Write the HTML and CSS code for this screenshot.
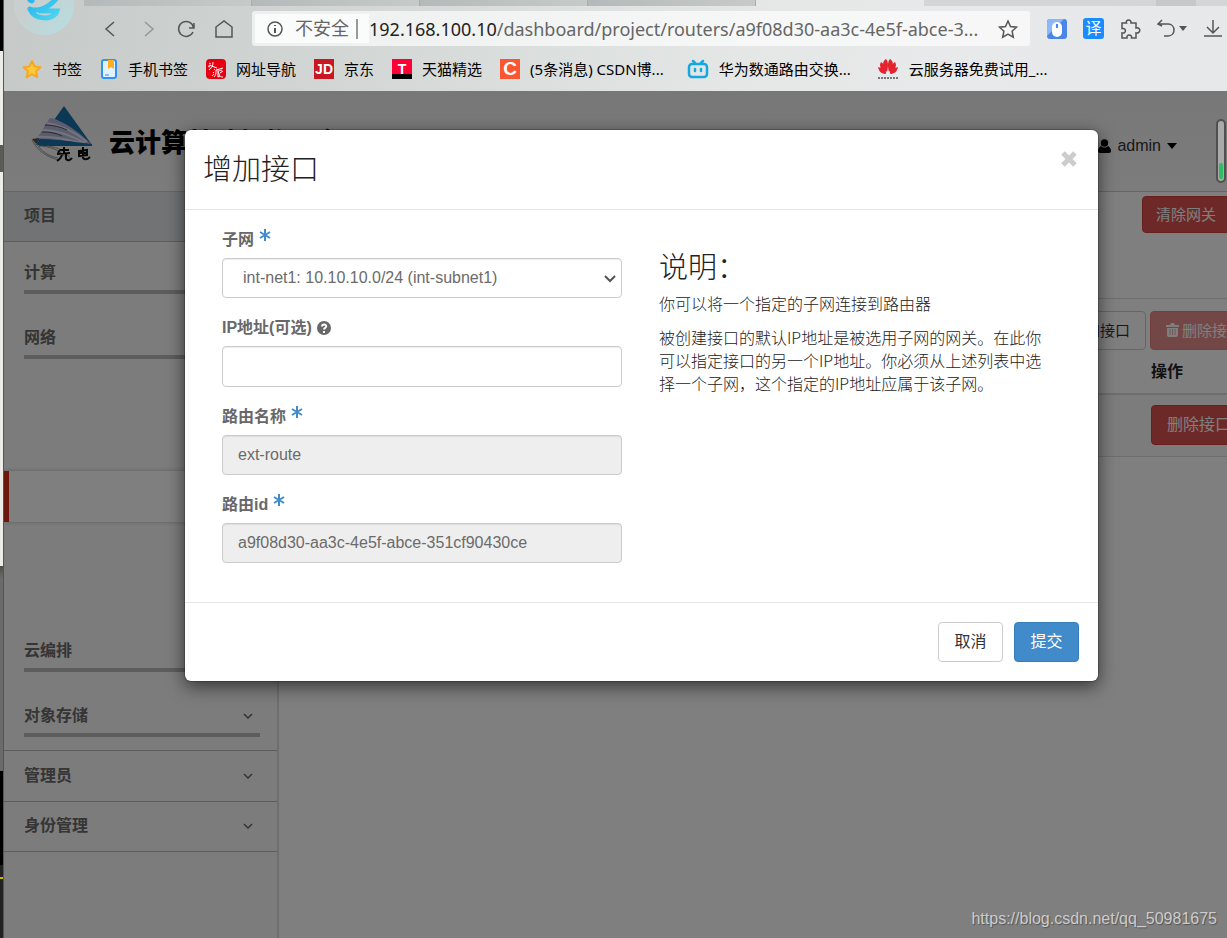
FILE: index.html
```html
<!DOCTYPE html>
<html lang="zh-CN">
<head>
<meta charset="utf-8">
<title>增加接口</title>
<link rel="stylesheet" href="styles.css">
</head>
<body>
<div class="desktop">
  <div class="edge" aria-hidden="true">
    <span class="e1"></span><span class="e2"></span><span class="e3"></span><span class="e4"></span><span class="e5"></span><span class="e6"></span><span class="e7"></span>
  </div>
  <div class="browser">
    <header class="chrome">
      <svg class="avatar" width="64" height="38" viewBox="0 0 64 38" aria-hidden="true">
        <defs><linearGradient id="av" x1="0" y1="0" x2="1" y2="1"><stop offset="0.4" stop-color="#c9cfce"/><stop offset="1" stop-color="#b4dfe3"/></linearGradient><linearGradient id="eb" x1="0" y1="0" x2="1" y2="1"><stop offset="0" stop-color="#25b4ee"/><stop offset="1" stop-color="#4fd6ee"/></linearGradient></defs>
        <circle cx="34" cy="5" r="30" fill="url(#av)"/>
        <path d="M20 0 22 1M20 9c8 3 18-1 26-10M20 9c3 7 8 9 15 9 6 0 11-3 12-7H30" fill="none" stroke="url(#eb)" stroke-width="5" stroke-linecap="round"/>
      </svg>
      <div class="tabs"><i></i><i></i><i></i><i></i><i class="on"></i><i class="rest"></i><i class="new"></i><i class="tail"></i></div>
      <div class="toolbar">
        <nav class="nav">
          <button aria-label="后退"><svg width="20" height="20" viewBox="0 0 20 20"><path d="M14 3 6 10l8 7"/></svg></button>
          <button aria-label="前进" class="off"><svg width="20" height="20" viewBox="0 0 20 20"><path d="m7 3 8 7-8 7"/></svg></button>
          <button aria-label="刷新"><svg width="20" height="20" viewBox="0 0 20 20"><path d="M17 13a7.500 7.500 0 1 1 .5-4.500M18 4v5h-5"/></svg></button>
          <button aria-label="主页"><svg width="20" height="20" viewBox="0 0 20 20"><path d="M2 18V8l8-6 8 6v10z"/></svg></button>
        </nav>
        <div class="address">
          <div class="security"><svg width="20" height="20" viewBox="0 0 20 20"><circle cx="10" cy="10" r="7"/><path d="M10 9v5M10 6v1" stroke-width="2"/></svg><span>不安全</span><b></b></div>
          <div class="url"><span>192.168.100.10</span>/dashboard/project/routers/a9f08d30-aa3c-4e5f-abce-3...</div>
          <button aria-label="收藏"><svg width="20" height="20" viewBox="0 0 20 20"><path d="m10 2 2.500 5.500 6 .7-4.400 4 1.200 6-5.300-3-5.300 3 1.200-6-4.400-4 6-.7z"/></svg></button>
        </div>
        <div class="tools">
          <button aria-label="鼠标手势"><svg class="fill" width="22" height="22" viewBox="0 0 22 22"><rect x="1" y="1" width="20" height="20" rx="3" fill="#4a86e8"/><path d="M1 18V4q0-3 3-3h14z" fill="#8ab8f8"/><rect x="6" y="4" width="10" height="15" rx="5" fill="#fff"/><path d="M11 6v4" stroke="#4a86e8" stroke-width="2"/></svg></button>
          <button aria-label="翻译" class="trans">译</button>
          <button aria-label="扩展"><svg width="22" height="22" viewBox="0 0 22 22"><path d="M3 5h4.500C6 1 13 1 12 5h5v5c5-1.500 5 6 0 5v5h-4.500c1-4-5.500-4-4.500 0H3v-5c4.500 1 4.500-5.500 0-4.500z"/></svg></button>
          <button aria-label="恢复"><svg width="32" height="22" viewBox="0 0 32 22"><path d="M6 2 2 6l4 2M2 6h10c8 0 8 12 0 12H8"/><path d="M23 8h8l-4 5z" class="solid"/></svg></button>
          <button aria-label="下载"><svg width="20" height="22" viewBox="0 0 20 22"><path d="M10 2v13M4 9l6 6 6-6M1 18h18"/></svg></button>
        </div>
      </div>
      <nav class="bookmarks">
        <a href="#"><svg width="20" height="20" viewBox="0 0 20 20"><path d="m10 2 2.500 5.500 6 .7-4.400 4 1.200 6-5.300-3-5.300 3 1.200-6-4.400-4 6-.7z" fill="#ffc83d" stroke="#f7a823" stroke-width="2" stroke-linejoin="round"/></svg>书签</a>
        <a href="#"><svg width="18" height="20" viewBox="0 0 18 20"><rect x="2" y="1" width="14" height="18" rx="2" fill="#e3f1ff" stroke="#2e92f7" stroke-width="2"/><path d="M8 1h6v9l-3-2-3 2z" fill="#ffb020"/><path d="M5 16h4" stroke="#2e92f7"/></svg>手机书签</a>
        <a href="#"><svg width="20" height="20" viewBox="0 0 20 20"><rect width="20" height="20" rx="4" fill="#e60012"/><path d="m3 4 2 1M2 7l2 1M7 3c0 4-1 5-4 8M3 6l8 3M8 10l1 1m-2 2 1 1m-2 3 2-2m2-4 7-2m-7 2c0 4 0 5-2 7m4-7v7l2-1m2-6c-4 1-4 1-3 4s2 3 4 3m-3-4 3-2" fill="none" stroke="#fff"/></svg>网址导航</a>
        <a href="#"><span class="ico jd">JD</span>京东</a>
        <a href="#"><span class="ico tm">T</span>天猫精选</a>
        <a href="#"><span class="ico cs">C</span>(5条消息) CSDN博...</a>
        <a href="#" class="bili"><svg width="22" height="20" viewBox="0 0 22 20"><g fill="none" stroke="#14a8e0" stroke-width="2.500" stroke-linecap="round"><rect x="2" y="5" width="18" height="13" rx="3"/><path d="m6 2 2 2M16 2l-2 2M8 10v2M14 10v2"/></g></svg>华为数通路由交换...</a>
        <a href="#" class="huawei"><svg width="22" height="22" viewBox="0 0 22 22"><g fill="#e4232e"><path d="M10 14C5 9 5 3 9 1c3 3 2 9 1 13zM12 14c-1-4-2-10 1-13 4 2 4 8-1 13zM9 15C3 12 2 7 4 4c3 2 5 6 5 11zM13 15c0-5 2-9 5-11 2 3 1 8-5 11zM9 16c-4 0-7-2-8-7 4 1 7 4 8 7zM13 16c1-3 4-6 8-7-1 5-4 7-8 7z"/></g><path d="M1 20h20" stroke="#777" stroke-width="2" stroke-dasharray="2 1"/></svg>云服务器免费试用_...</a>
      </nav>
    </header>

    <div class="dash">
      <header class="top">
        <svg width="64" height="58" viewBox="0 0 64 58" aria-hidden="true">
          <path d="M33 1 61 40H5z" fill="#1670a8"/>
          <path d="M19 13c9 1 28 12 42 27-16-4-38-5-56-6L11 26l3-6z" fill="#b4b9de"/>
          <path d="M16 18c14 2 28 9 40 19M11 25c14 0 28 5 43 13M5 32c14-1 30 2 45 6" stroke="#e8e8fa" stroke-width="2" fill="none"/>
          <path d="M14 20c8 0 16 2 22 5M11 27c8 0 14 1 20 4" stroke="#555" stroke-width="1" fill="none"/>
          <path d="M7 34c14 0 38 3 54 5v2H8z" fill="#1670a8"/>
          <path d="m1 34 7-1-2 7z" fill="#555"/>
          <path d="M1 35c5 10 14 17 27 20M5 38c5 8 12 13 22 15M8 41c10 0 22 4 28 13M16 41c12 1 20 6 24 14" fill="none" stroke="#999" stroke-width="1"/>
          <g fill="none" stroke="#111" stroke-width="2"><path d="M33 42v7m-4-4-2 3m2-3h9M26 49l13-1M31 49c0 3-2 5-5 7m9-8v6q3 3 6-1M48 46l8-1v5l-8 1zM48 48h8M52 42v11q3 3 7-1"/></g>
        </svg>
        <strong>云计算基础架构平台</strong>
        <button class="user"><svg width="13" height="14" viewBox="0 0 13 14"><circle cx="6.500" cy="4" r="3.700"/><path d="M3 7c-2 1-3 3-3 5 0 1 1 2 2 2h9c1 0 2-1 2-2 0-2-1-4-3-5-2 2-5 2-7 0z"/></svg>admin<svg width="10" height="6" viewBox="0 0 10 6"><path d="M0 0h10L5 6z"/></svg></button>
      </header>
      <div class="columns">
        <nav class="side">
          <a class="group open" href="#">项目</a>
          <div class="panels">
            <a class="panel" href="#">计算</a>
            <a class="panel" href="#">网络</a>
            <a class="current" href="#" aria-label="路由"></a>
            <a class="panel" href="#">云编排</a>
            <a class="panel" href="#">对象存储<svg width="10" height="6" viewBox="0 0 10 6"><path d="m1 1 4 4 4-4"/></svg></a>
          </div>
          <a class="group" href="#">管理员<svg width="10" height="6" viewBox="0 0 10 6"><path d="m1 1 4 4 4-4"/></svg></a>
          <a class="group last" href="#">身份管理<svg width="10" height="6" viewBox="0 0 10 6"><path d="m1 1 4 4 4-4"/></svg></a>
        </nav>
        <main class="content">
          <div class="gateway"><button class="btn danger small">清除网关</button></div>
          <div class="actions">
            <button class="btn">增加接口</button>
            <button class="btn danger faded"><svg width="13" height="14" viewBox="0 0 13 14"><path d="M0 2h4l1-2h3l1 2h4v2H0zM1 5h11v7q0 2-2 2H3q-2 0-2-2z"/><path d="M4 6v6M6.500 6v6M9 6v6" stroke="#d9837f"/></svg>删除接口</button>
          </div>
          <table class="grid">
            <thead><tr><th></th><th class="act">操作</th></tr></thead>
            <tbody><tr><td></td><td><button class="btn danger">删除接口</button></td></tr></tbody>
          </table>
        </main>
      </div>

      <div class="overlay">
        <form class="modal" role="dialog" aria-labelledby="ttl">
          <header class="mhead">
            <h1 id="ttl">增加接口</h1>
            <button type="button" aria-label="关闭"><svg width="18" height="18" viewBox="0 0 18 18"><path d="m3 3 12 12M15 3 3 15"/></svg></button>
          </header>
          <div class="mbody">
            <div class="fields">
              <div class="field">
                <label for="subnet">子网<svg class="req" width="12" height="12" viewBox="0 0 12 12"><path d="M6 0v12M1 3l10 6M11 3 1 9"/></svg></label>
                <div class="pick"><select id="subnet"><option>int-net1: 10.10.10.0/24 (int-subnet1)</option></select><svg width="12" height="8" viewBox="0 0 12 8"><path d="m1 1 5 5 5-5"/></svg></div>
              </div>
              <div class="field">
                <label for="ip">IP地址(可选)<svg class="help" width="14" height="14" viewBox="0 0 14 14"><circle cx="7" cy="7" r="7" fill="#686868"/><path d="M5 5.500c0-3 4.500-2.500 4.200 0C9 7 7 6.700 7 8.500M7 10v2" fill="none" stroke="#fff" stroke-width="2"/></svg></label>
                <input id="ip" type="text">
              </div>
              <div class="field">
                <label for="rname">路由名称<svg class="req" width="12" height="12" viewBox="0 0 12 12"><path d="M6 0v12M1 3l10 6M11 3 1 9"/></svg></label>
                <input id="rname" type="text" value="ext-route" readonly>
              </div>
              <div class="field">
                <label for="rid">路由id<svg class="req" width="12" height="12" viewBox="0 0 12 12"><path d="M6 0v12M1 3l10 6M11 3 1 9"/></svg></label>
                <input id="rid" type="text" value="a9f08d30-aa3c-4e5f-abce-351cf90430ce" readonly>
              </div>
            </div>
            <div class="desc">
              <h2>说明：</h2>
              <p>你可以将一个指定的子网连接到路由器</p>
              <p>被创建接口的默认IP地址是被选用子网的网关。在此你可以指定接口的另一个IP地址。你必须从上述列表中选择一个子网，这个指定的IP地址应属于该子网。</p>
            </div>
          </div>
          <footer class="mfoot">
            <button type="button" class="btn">取消</button>
            <button type="submit" class="btn primary">提交</button>
          </footer>
        </form>
      </div>
      <div class="meter" aria-hidden="true"><i></i></div>
      <div class="mark">https://blog.csdn.net/qq_50981675</div>
    </div>
  </div>
</div>
</body>
</html>
```

FILE: styles.css
```css
* { box-sizing: border-box; }
body { margin: 0; font: 16px/24px "Liberation Sans", "Noto Sans CJK SC", sans-serif; color: #333; overflow: hidden; }
button { font: inherit; color: inherit; border: 0; background: none; padding: 0; }
a { color: inherit; text-decoration: none; }
svg { flex: none; }

.desktop { display: flex; height: 100vh; }
.edge { width: 4px; flex: none; display: flex; flex-direction: column; border-right: 1px solid #555; }
.e1 { flex: 51; background: #000; }
.e2 { flex: 94; background: #ecece8; }
.e3 { flex: 27; background: #5b5a56; }
.e4 { flex: 394; background: #ecece8; }
.e5 { flex: 205; background: linear-gradient(#4c4c4a, #6a6a68 12px); }
.e6 { flex: 94; background: #000; }
.e7 { flex: 73; background: linear-gradient(#222 12px, #c9b400 12px, #c9b400 14px, #222 14px); }

.browser { flex: 1; min-width: 0; display: flex; flex-direction: column; }

/* browser chrome */
.chrome { position: relative; flex: none; background: linear-gradient(100deg, #c5cac9, #d3d8d7 30%, #e4e7e6 60%, #e8e9ea 75%, #e7e8e9); }
.avatar { position: absolute; left: 6px; top: 0; }
.tabs { display: flex; height: 6px; padding-left: 80px; }
.tabs i { width: 168px; background: linear-gradient(90deg, #b4bab9, #c6cbca); border-right: 1px solid #a5abaa; }
.tabs .on { background: none; border: 0; }
.tabs .rest { width: 232px; background: #d4d5d6; border: 0; }
.tabs .new { width: 40px; background: #c6c8c9; border: 0; }
.tabs .tail { flex: 1; background: #d4d5d6; border: 0; }

.toolbar { display: flex; align-items: center; height: 45px; }
.toolbar svg { display: block; fill: none; stroke: #555; stroke-width: 1.500; }
.toolbar svg.fill { stroke: none; }
.toolbar .solid { fill: #555; stroke: none; }
.nav { display: flex; gap: 18px; padding-left: 96px; }
.nav .off { opacity: .45; }
.address { flex: 1; min-width: 0; display: flex; align-items: center; height: 35px; margin-left: 18px; padding: 0 12px 0 3px; background: rgba(255, 255, 255, .65); border-radius: 3px; }
.security { display: flex; align-items: center; gap: 10px; height: 29px; padding: 0 11px 0 10px; background: rgba(255, 255, 255, .7); font-size: 18px; color: #666; }
.security b { width: 2px; height: 20px; margin-left: -3px; background: #999; }
.url { flex: 1; min-width: 0; overflow: hidden; white-space: nowrap; font: 18px/28px "Noto Sans", sans-serif; color: #666; }
.url span { color: #222; }
.tools { display: flex; align-items: center; gap: 15px; margin: 0 4px 0 16px; }
.trans { width: 21px; height: 21px; border-radius: 3px; background: #1a8cff; color: #fff; font-size: 16px; line-height: 20px; }

.bookmarks { display: flex; align-items: center; height: 40px; padding: 0 0 4px 18px; gap: 18px; font: 15px/24px "Noto Sans", "Noto Sans CJK SC", sans-serif; color: #000; white-space: nowrap; }
.bookmarks a { display: flex; align-items: center; gap: 10px; }
.bookmarks .bili { margin-left: 5px; }
.bookmarks .huawei { margin-left: 8px; }
.ico { width: 20px; height: 20px; font: 700 14px/20px "Liberation Sans", sans-serif; text-align: center; color: #fff; }
.jd { background: #c81623; }
.tm { background: linear-gradient(#ff0036 15px, #000 15px); }
.cs { background: #fc5531; font-size: 19px; }

/* dashboard */
.dash { position: relative; flex: 1; min-height: 0; overflow: hidden; display: flex; flex-direction: column; background: #fff; }
.top { display: flex; align-items: center; height: 101px; flex: none; padding: 0 50px 15px 27px; background: linear-gradient(#efefef, #f9f9f9); border-bottom: 1px solid #ccc; }
.top strong { flex: 1; margin-left: 14px; padding-top: 18px; font-size: 26px; font-weight: 900; color: #000; }
.user { display: flex; align-items: center; gap: 6px; padding-top: 24px; }
.columns { display: flex; flex: 1; min-height: 0; }
.side { width: 275px; flex: none; background: #f9f9f9; border-right: 2px solid #ddd; font-weight: 700; color: #6a6a6a; }
.side svg { fill: none; stroke: #666; stroke-width: 1.500; }
.group { display: flex; align-items: center; justify-content: space-between; height: 51px; padding: 0 24px 1px 20px; border-bottom: 1px solid #bbb; }
.group.open, .group.last { height: 50px; }
.group.open { background: #e3e6e9; }
.panels { padding: 0 17px 13px 20px; margin-top: -13px; border-bottom: 1px solid #bbb; }
.panel { display: flex; align-items: center; justify-content: space-between; height: 65px; padding: 26px 7px 0 0; border-bottom: 4px solid #bbb; }
.current { display: block; height: 51px; margin: 112px -17px 85px -20px; background: #fff; border-left: 5px solid #d9301a; box-shadow: 0 0 4px #bbb; }

.content { flex: 1; min-width: 0; margin-right: -31px; }
.btn { height: 40px; padding: 0 15px; border: 1px solid #ccc; border-radius: 4px; background: #fff; color: #333; font-size: 16px; white-space: nowrap; }
.danger { background: #d9534f; border-color: #d43f3a; color: #fff; }
.small { height: 37px; padding: 0 13px; font-size: 15px; }
.faded { opacity: .65; }
.faded svg { margin-right: 3px; fill: #fff; vertical-align: -1px; }
.gateway { display: flex; justify-content: flex-end; height: 107px; padding: 4px 28px 0; border-bottom: 1px solid #ddd; }
.actions { display: flex; justify-content: flex-end; gap: 4px; padding: 12px 0 0; }
.actions .btn { height: 39px; font-size: 15px; }
.grid { width: 100%; border-collapse: collapse; }
.grid th { height: 44px; padding: 0; text-align: left; color: #222; border-bottom: 2px solid #ddd; }
.grid .act { width: 107px; }
.grid td { height: 62px; padding: 0; background: #f9f9f9; border-bottom: 1px solid #ddd; }

/* dialog */
.overlay { position: absolute; inset: 0; padding: 39px 129px 0 181px; background: rgba(0, 0, 0, .5); }
.modal { background: #fff; border-radius: 6px; box-shadow: 0 5px 18px rgba(0, 0, 0, .6), 0 0 0 1px rgba(0, 0, 0, .2); }
.mhead { display: flex; justify-content: space-between; align-items: flex-start; height: 80px; padding: 20px 20px 0 18px; border-bottom: 1px solid #e5e5e5; }
h1, h2 { margin: 0; font-weight: 300; font-size: 29px; line-height: 40px; color: #222; }
.mhead svg { display: block; fill: none; stroke: #ccc; stroke-width: 5; }
.mbody { display: grid; grid-template-columns: 1fr 1fr; gap: 37px; padding: 18px 39px 39px 37px; border-bottom: 1px solid #e5e5e5; }
.fields { display: flex; flex-direction: column; gap: 18px; }
.field label { display: block; margin-bottom: 6px; font-weight: 700; color: #686868; }
.req { margin-left: 5px; vertical-align: 4px; fill: none; stroke: #428bca; stroke-width: 2; }
.help { margin-left: 5px; vertical-align: -2px; }
.field input, .field select { display: block; width: 100%; height: 41px; padding: 0 15px; border: 1px solid #ccc; border-radius: 4px; background: #fff; box-shadow: inset 0 1px 1px rgba(0, 0, 0, .075); font: 16px/24px "Liberation Sans", "Noto Sans CJK SC", sans-serif; color: #6b6b6b; appearance: none; }
.field select { padding-left: 20px; height: 40px; }
.field input[readonly] { background: #eee; height: 40px; }
.pick { position: relative; }
.pick svg { position: absolute; right: 6px; top: 17px; fill: none; stroke: #555; stroke-width: 2; pointer-events: none; }
.desc { padding: 17px 8px 0 0; font: 300 16px/23px "Noto Sans CJK SC", sans-serif; color: #222; }
.desc p { margin: 0 0 11px; }
.desc h2 { margin-bottom: 7px; }
.mfoot { display: flex; justify-content: flex-end; gap: 11px; padding: 19px; }
.mfoot .btn { min-width: 65px; }
.mfoot .primary { background: #428bca; border-color: #357ebd; color: #fff; }

.meter { position: absolute; right: 1px; top: 28px; width: 10px; height: 64px; padding: 2px 1px; display: flex; align-items: flex-end; background: #aaa; border: 2px solid #505050; border-radius: 5px; }
.meter i { width: 100%; height: 16px; background: #2dbd63; border-radius: 2px; }
.mark { position: absolute; right: 10px; bottom: 8px; line-height: 22px; color: #ccc; text-shadow: 1px 1px 1px #555; }
```
